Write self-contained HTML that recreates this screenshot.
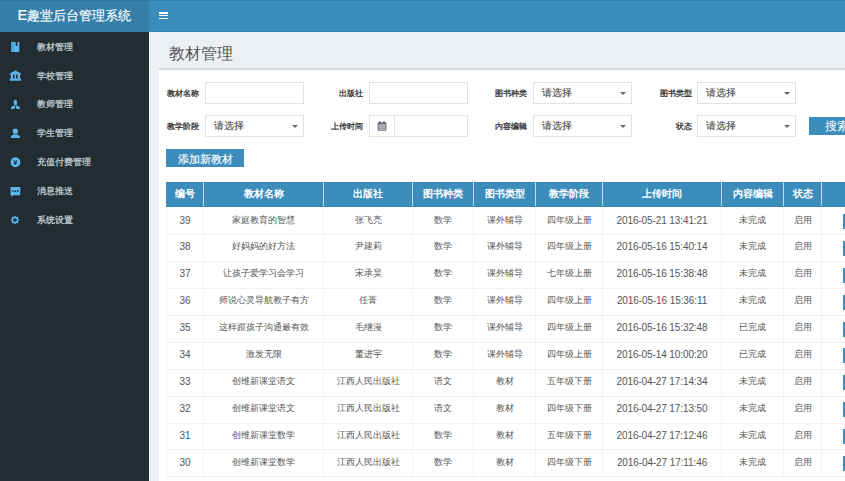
<!DOCTYPE html>
<html><head><meta charset="utf-8"><style>*{margin:0;padding:0;box-sizing:border-box}
html,body{width:845px;height:481px;overflow:hidden;background:#ecf0f5;font-family:"Liberation Sans",sans-serif;position:relative}
.abs{position:absolute}
#logo{left:0;top:0;width:149px;height:31.5px;background:#367fa9;box-shadow:inset 0 1px 0 #2e74a0;color:#fff;font-size:13.3px;line-height:30px;padding-left:17.5px;white-space:nowrap;-webkit-text-stroke:0.15px #fff}
#nav{left:149px;top:0;width:696px;height:31.5px;background:#3c8dbc;border-bottom:1px solid #2f80b3;box-shadow:inset 0 1px 0 #2c82b4}
.bar{position:absolute;left:10px;width:9px;height:1.6px;background:#fff}
#side{left:0;top:31.5px;width:149px;height:450px;background:#222d32}
.mi{position:absolute;left:37px;font-size:9.3px;color:#c4d0d6;-webkit-text-stroke:0.25px #c4d0d6;white-space:nowrap;line-height:12px}
.ic{position:absolute;left:8px;width:14px;height:14px}
#title{left:169px;top:44.5px;font-size:15.5px;color:#555;line-height:18px;white-space:nowrap}
#box{left:159px;top:68px;width:700px;height:420px;background:#fff;border-top:2px solid #d6d9e1}
.lbl{position:absolute;font-size:8px;font-weight:normal;color:#333;-webkit-text-stroke:0.3px #333;white-space:nowrap;line-height:12px;text-align:right}
.inp{position:absolute;height:22px;width:99px;border:1px solid #e0e2e7;background:#fff}
.sel .t{position:absolute;left:8px;top:4px;font-size:9.5px;color:#444;-webkit-text-stroke:0.1px #444;line-height:12px;white-space:nowrap}
.sel .car{position:absolute;right:5px;top:9px;width:0;height:0;border-left:3px solid transparent;border-right:3px solid transparent;border-top:3px solid #666}
.addon{position:absolute;left:0;top:0;width:25px;height:20px;border-right:1px solid #e0e2e7}
.btn{position:absolute;background:#3c8dbc;color:#fff;white-space:nowrap;text-align:center}
#tbl{left:166px;top:181px;width:700px;height:296px}
.thead{position:absolute;left:0;top:0.5px;width:700px;height:25px;background:#3c8dbc;box-shadow:inset 0 1px 0 #3686b8,inset 0 -1px 0 #3584b6}
.th{position:absolute;top:0;height:24.5px;line-height:23.5px;text-align:center;color:#fff;font-weight:bold;font-size:10.2px;border-left:1px solid #c4dbeb;white-space:nowrap}
.th:first-child{border-left:none}
.tr{position:absolute;left:0;width:700px;border-bottom:1px solid #f1f1f1}
.td{position:absolute;top:0;height:100%;display:flex;align-items:center;justify-content:center;padding-bottom:2.6px;color:#555;font-size:9.3px;border-left:1px solid #f3f3f3;white-space:nowrap}
.td.num{font-size:10px}.td.dt{font-size:10px;letter-spacing:-0.1px}
.opbtn{position:absolute;left:21px;top:5.5px;width:20px;height:15px;background:#3c8dbc}
</style></head>
<body>
<div id="logo" class="abs"><span style="font-size:14.5px">E</span>趣堂后台管理系统</div>
<div id="nav" class="abs">
  <div class="bar" style="top:12px"></div>
  <div class="bar" style="top:14.8px"></div>
  <div class="bar" style="top:17.6px"></div>
</div>
<div id="side" class="abs">
  <div class="mi" style="top:9.5px">教材管理</div>
  <div class="mi" style="top:38px">学校管理</div>
  <div class="mi" style="top:66.7px">教师管理</div>
  <div class="mi" style="top:95.9px">学生管理</div>
  <div class="mi" style="top:124.9px">充值付费管理</div>
  <div class="mi" style="top:153.8px">消息推送</div>
  <div class="mi" style="top:182.9px">系统设置</div>
</div>

<svg class="abs" style="left:10px;top:41px" width="11" height="12" viewBox="0 0 11 12"><path fill="#5ab4ee" d="M1,0.9 H5.7 V4.6 L6.6,5.3 L7.5,4.6 V1.1 H9.3 V11 H1 Z"/><rect x="1" y="0.9" width="2.6" height="10.1" fill="#4a9fd8"/></svg>
<svg class="abs" style="left:9px;top:70px" width="13" height="12" viewBox="0 0 13 12"><path fill="#5ab4ee" d="M0.8,3.4 L6.4,0.5 L12,3.4 V4.4 H0.8 Z M1.8,4.4 H4 V8.8 H1.8 Z M5.5,4.4 H7.1 V8.8 H5.5 Z M8.7,4.4 H11 V8.8 H8.7 Z M0.8,8.6 H12 V10.8 H0.8 Z"/></svg>
<svg class="abs" style="left:10px;top:99px" width="11" height="11" viewBox="0 0 11 11"><ellipse cx="5.4" cy="3.4" rx="1.75" ry="2.7" fill="#5ab4ee"/><path fill="#5ab4ee" d="M5.05,6.2 C3,6.6 0.8,7.6 0.8,9.3 C0.8,10 1.4,10.2 2.2,10.2 C3.6,10.2 4.6,9.6 5.05,8.6 Z M5.75,6.2 C7.8,6.6 10,7.6 10,9.3 C10,10 9.4,10.2 8.6,10.2 C7.2,10.2 6.2,9.6 5.75,8.6 Z"/></svg>
<svg class="abs" style="left:10px;top:128px" width="11" height="11" viewBox="0 0 11 11"><circle cx="5.4" cy="3.2" r="2.6" fill="#5ab4ee"/><path fill="#5ab4ee" d="M0.8,10 C0.8,7.4 2.6,6.3 5.4,6.3 C8.2,6.3 10,7.4 10,10 Z"/></svg>
<svg class="abs" style="left:10px;top:157px" width="11" height="11" viewBox="0 0 11 11"><circle cx="5.4" cy="5.25" r="4.9" fill="#5ab4ee"/><path d="M3.6,2.9 L5.4,5.3 L7.2,2.9 M5.4,5.3 V8 M3.9,5.6 H6.9 M3.9,6.7 H6.9" stroke="#222d32" stroke-width="0.9" fill="none"/></svg>
<svg class="abs" style="left:10px;top:186px" width="11" height="12" viewBox="0 0 11 12"><path fill="#5ab4ee" d="M0.5,1 H10.25 V9.25 H3.5 L1.5,11 V9.25 H0.5 Z"/><circle cx="3" cy="5.1" r="0.9" fill="#222d32"/><circle cx="5.4" cy="5.1" r="0.9" fill="#222d32"/><circle cx="7.8" cy="5.1" r="0.9" fill="#222d32"/></svg>
<svg class="abs" style="left:9px;top:214px" width="12" height="12" viewBox="0 0 12 12"><path fill="#5ab4ee" fill-rule="evenodd" d="M4.66,2.77 L5.40,2.55 L5.46,1.73 L6.54,1.73 L6.60,2.55 L7.34,2.77 L8.01,3.14 L8.64,2.60 L9.40,3.36 L8.86,3.99 L9.23,4.66 L9.45,5.40 L10.27,5.46 L10.27,6.54 L9.45,6.60 L9.23,7.34 L8.86,8.01 L9.40,8.64 L8.64,9.40 L8.01,8.86 L7.34,9.23 L6.60,9.45 L6.54,10.27 L5.46,10.27 L5.40,9.45 L4.66,9.23 L3.99,8.86 L3.36,9.40 L2.60,8.64 L3.14,8.01 L2.77,7.34 L2.55,6.60 L1.73,6.54 L1.73,5.46 L2.55,5.40 L2.77,4.66 L3.14,3.99 L2.60,3.36 L3.36,2.60 L3.99,3.14Z M7.8,6 A1.8,1.8 0 1 0 4.2,6 A1.8,1.8 0 1 0 7.8,6 Z"/></svg>
<div id="title" class="abs">教材管理</div>
<div id="box" class="abs"></div>
<!-- form -->
<div class="lbl" style="left:161px;top:88px;width:38px">教材名称</div>
<div class="inp" style="left:205px;top:82px"></div>
<div class="lbl" style="left:321px;top:88px;width:42px">出版社</div>
<div class="inp" style="left:369px;top:82px"></div>
<div class="lbl" style="left:481px;top:88px;width:46px">图书种类</div>
<div class="inp sel" style="left:533px;top:82px"><span class="t">请选择</span><span class="car"></span></div>
<div class="lbl" style="left:641px;top:88px;width:51px">图书类型</div>
<div class="inp sel" style="left:697px;top:82px"><span class="t">请选择</span><span class="car"></span></div>

<div class="lbl" style="left:161px;top:121px;width:38px">教学阶段</div>
<div class="inp sel" style="left:205px;top:115px"><span class="t">请选择</span><span class="car"></span></div>
<div class="lbl" style="left:321px;top:121px;width:42px">上传时间</div>
<div class="inp" style="left:369px;top:115px"><span class="addon"></span></div>
<div class="lbl" style="left:481px;top:121px;width:46px">内容编辑</div>
<div class="inp sel" style="left:533px;top:115px"><span class="t">请选择</span><span class="car"></span></div>
<div class="lbl" style="left:641px;top:121px;width:51px">状态</div>
<div class="inp sel" style="left:697px;top:115px"><span class="t">请选择</span><span class="car"></span></div>
<svg class="abs" style="left:376px;top:120px" width="12" height="12" viewBox="0 0 12 12"><rect x="1.6" y="2.2" width="8.8" height="8.6" rx="1" fill="#6b6b78"/><rect x="2.6" y="4.6" width="6.8" height="1" fill="#e8e8ee"/><rect x="2.6" y="6.6" width="6.8" height="1" fill="#e8e8ee"/><rect x="2.6" y="8.6" width="6.8" height="1" fill="#e8e8ee"/><rect x="3.4" y="1.1" width="1.1" height="2" fill="#555"/><rect x="7.5" y="1.1" width="1.1" height="2" fill="#555"/></svg>
<div class="btn" style="left:809px;top:117px;width:60px;height:18px;font-size:12px;line-height:18px;text-align:left;padding-left:16px">搜索</div>
<div class="btn" style="left:166px;top:149px;width:78px;height:18px;font-size:10.8px;line-height:21px;-webkit-text-stroke:0.15px #fff">添加新教材</div>
<div id="tbl" class="abs">
  <div class="thead"><div class="th" style="left:0px;width:37px">编号</div><div class="th" style="left:37px;width:120px">教材名称</div><div class="th" style="left:157px;width:89px">出版社</div><div class="th" style="left:246px;width:61px">图书种类</div><div class="th" style="left:307px;width:62px">图书类型</div><div class="th" style="left:369px;width:67px">教学阶段</div><div class="th" style="left:436px;width:119px">上传时间</div><div class="th" style="left:555px;width:62px">内容编辑</div><div class="th" style="left:617px;width:38px">状态</div><div class="th" style="left:655px;width:79px"></div></div>
  <div class="tr" style="top:27.4px;height:26.9px"><div class="td num" style="left:0px;width:37px">39</div><div class="td" style="left:37px;width:120px">家庭教育的智慧</div><div class="td" style="left:157px;width:89px">张飞亮</div><div class="td" style="left:246px;width:61px">数学</div><div class="td" style="left:307px;width:62px">课外辅导</div><div class="td" style="left:369px;width:67px">四年级上册</div><div class="td dt" style="left:436px;width:119px">2016-05-21 13:41:21</div><div class="td" style="left:555px;width:62px">未完成</div><div class="td" style="left:617px;width:38px">启用</div><div class="td" style="left:655px;width:79px"><span class="opbtn"></span></div></div><div class="tr" style="top:54.3px;height:26.9px"><div class="td num" style="left:0px;width:37px">38</div><div class="td" style="left:37px;width:120px">好妈妈的好方法</div><div class="td" style="left:157px;width:89px">尹建莉</div><div class="td" style="left:246px;width:61px">数学</div><div class="td" style="left:307px;width:62px">课外辅导</div><div class="td" style="left:369px;width:67px">四年级上册</div><div class="td dt" style="left:436px;width:119px">2016-05-16 15:40:14</div><div class="td" style="left:555px;width:62px">未完成</div><div class="td" style="left:617px;width:38px">启用</div><div class="td" style="left:655px;width:79px"><span class="opbtn"></span></div></div><div class="tr" style="top:81.19999999999999px;height:26.9px"><div class="td num" style="left:0px;width:37px">37</div><div class="td" style="left:37px;width:120px">让孩子爱学习会学习</div><div class="td" style="left:157px;width:89px">宋承昊</div><div class="td" style="left:246px;width:61px">数学</div><div class="td" style="left:307px;width:62px">课外辅导</div><div class="td" style="left:369px;width:67px">七年级上册</div><div class="td dt" style="left:436px;width:119px">2016-05-16 15:38:48</div><div class="td" style="left:555px;width:62px">未完成</div><div class="td" style="left:617px;width:38px">启用</div><div class="td" style="left:655px;width:79px"><span class="opbtn"></span></div></div><div class="tr" style="top:108.1px;height:26.9px"><div class="td num" style="left:0px;width:37px">36</div><div class="td" style="left:37px;width:120px">师说心灵导航教子有方</div><div class="td" style="left:157px;width:89px">任菁</div><div class="td" style="left:246px;width:61px">数学</div><div class="td" style="left:307px;width:62px">课外辅导</div><div class="td" style="left:369px;width:67px">四年级上册</div><div class="td dt" style="left:436px;width:119px">2016-05-16 15:36:11</div><div class="td" style="left:555px;width:62px">未完成</div><div class="td" style="left:617px;width:38px">启用</div><div class="td" style="left:655px;width:79px"><span class="opbtn"></span></div></div><div class="tr" style="top:135.0px;height:26.9px"><div class="td num" style="left:0px;width:37px">35</div><div class="td" style="left:37px;width:120px">这样跟孩子沟通最有效</div><div class="td" style="left:157px;width:89px">毛继漫</div><div class="td" style="left:246px;width:61px">数学</div><div class="td" style="left:307px;width:62px">课外辅导</div><div class="td" style="left:369px;width:67px">四年级上册</div><div class="td dt" style="left:436px;width:119px">2016-05-16 15:32:48</div><div class="td" style="left:555px;width:62px">已完成</div><div class="td" style="left:617px;width:38px">启用</div><div class="td" style="left:655px;width:79px"><span class="opbtn"></span></div></div><div class="tr" style="top:161.9px;height:26.9px"><div class="td num" style="left:0px;width:37px">34</div><div class="td" style="left:37px;width:120px">激发无限</div><div class="td" style="left:157px;width:89px">董进宇</div><div class="td" style="left:246px;width:61px">数学</div><div class="td" style="left:307px;width:62px">课外辅导</div><div class="td" style="left:369px;width:67px">四年级上册</div><div class="td dt" style="left:436px;width:119px">2016-05-14 10:00:20</div><div class="td" style="left:555px;width:62px">已完成</div><div class="td" style="left:617px;width:38px">启用</div><div class="td" style="left:655px;width:79px"><span class="opbtn"></span></div></div><div class="tr" style="top:188.79999999999998px;height:26.9px"><div class="td num" style="left:0px;width:37px">33</div><div class="td" style="left:37px;width:120px">创维新课堂语文</div><div class="td" style="left:157px;width:89px">江西人民出版社</div><div class="td" style="left:246px;width:61px">语文</div><div class="td" style="left:307px;width:62px">教材</div><div class="td" style="left:369px;width:67px">五年级下册</div><div class="td dt" style="left:436px;width:119px">2016-04-27 17:14:34</div><div class="td" style="left:555px;width:62px">未完成</div><div class="td" style="left:617px;width:38px">启用</div><div class="td" style="left:655px;width:79px"><span class="opbtn"></span></div></div><div class="tr" style="top:215.7px;height:26.9px"><div class="td num" style="left:0px;width:37px">32</div><div class="td" style="left:37px;width:120px">创维新课堂语文</div><div class="td" style="left:157px;width:89px">江西人民出版社</div><div class="td" style="left:246px;width:61px">语文</div><div class="td" style="left:307px;width:62px">教材</div><div class="td" style="left:369px;width:67px">四年级下册</div><div class="td dt" style="left:436px;width:119px">2016-04-27 17:13:50</div><div class="td" style="left:555px;width:62px">未完成</div><div class="td" style="left:617px;width:38px">启用</div><div class="td" style="left:655px;width:79px"><span class="opbtn"></span></div></div><div class="tr" style="top:242.6px;height:26.9px"><div class="td num" style="left:0px;width:37px">31</div><div class="td" style="left:37px;width:120px">创维新课堂数学</div><div class="td" style="left:157px;width:89px">江西人民出版社</div><div class="td" style="left:246px;width:61px">数学</div><div class="td" style="left:307px;width:62px">教材</div><div class="td" style="left:369px;width:67px">五年级下册</div><div class="td dt" style="left:436px;width:119px">2016-04-27 17:12:46</div><div class="td" style="left:555px;width:62px">未完成</div><div class="td" style="left:617px;width:38px">启用</div><div class="td" style="left:655px;width:79px"><span class="opbtn"></span></div></div><div class="tr" style="top:269.5px;height:26.9px"><div class="td num" style="left:0px;width:37px">30</div><div class="td" style="left:37px;width:120px">创维新课堂数学</div><div class="td" style="left:157px;width:89px">江西人民出版社</div><div class="td" style="left:246px;width:61px">数学</div><div class="td" style="left:307px;width:62px">教材</div><div class="td" style="left:369px;width:67px">四年级下册</div><div class="td dt" style="left:436px;width:119px">2016-04-27 17:11:46</div><div class="td" style="left:555px;width:62px">未完成</div><div class="td" style="left:617px;width:38px">启用</div><div class="td" style="left:655px;width:79px"><span class="opbtn"></span></div></div>
</div>
</body></html>
